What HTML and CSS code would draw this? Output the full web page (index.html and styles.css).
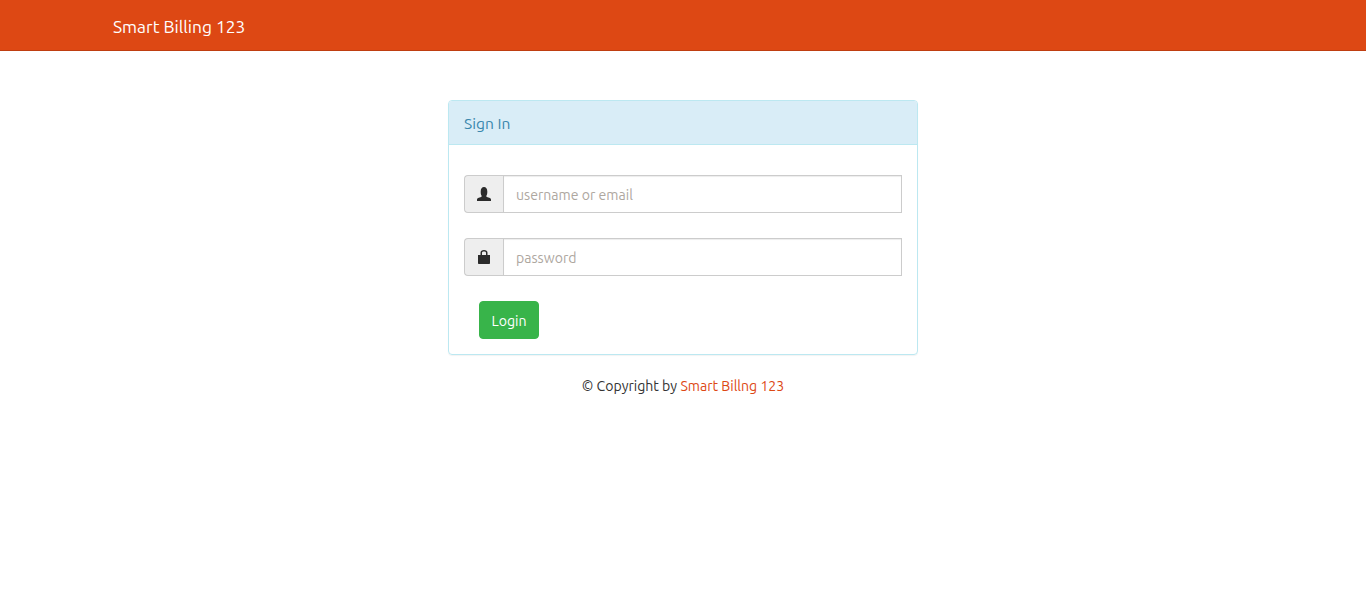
FILE: index.html
```html
<!DOCTYPE html>
<html lang="en">
<head>
<meta charset="utf-8">
<title>Smart Billing 123</title>
<link rel="stylesheet" href="styles.css">
</head>
<body>
<nav class="navbar"><a class="brand" href="#">Smart Billing 123</a></nav>
<main class="main">
  <section class="panel">
    <div class="panel-heading">Sign In</div>
    <form class="panel-body">
      <div class="input-group">
        <span class="addon"><svg width="14" height="14" viewBox="0 0 14 14"><path fill="#2b2b2b" d="M0 14v-1.500c0-.9.8-1.300 1.800-1.700l2.300-.9c.6-.3.7-.9.4-1.500C3.800 7.300 3.700 6 3.700 4.400 3.700 1.600 5 0 7 0s3.300 1.600 3.300 4.400c0 1.600-.1 2.900-.8 4-.3.6-.2 1.200.4 1.500l2.300.9c1 .4 1.800.8 1.800 1.700V14z"/></svg></span>
        <input class="field" type="text" placeholder="username or email">
      </div>
      <div class="input-group">
        <span class="addon"><svg width="14" height="14" viewBox="0 0 14 14"><path fill="#2b2b2b" fill-rule="evenodd" d="M3.500 5V2.800C3.500 1 4.900 0 7 0s3.500 1 3.500 2.800V5H13v8c0 .6-.4 1-1 1H2c-.6 0-1-.4-1-1V5zM5 5h4V2.800c0-.8-.8-1.300-2-1.300s-2 .5-2 1.300z"/></svg></span>
        <input class="field" type="password" placeholder="password">
      </div>
      <button class="login" type="button">Login</button>
    </form>
  </section>
  <p class="copyright">© Copyright by <a href="#">Smart Billng 123</a></p>
</main>
</body>
</html>
```
FILE: styles.css
```css
* { box-sizing: border-box; }
html, body { margin: 0; padding: 0; }
body {
  background: #fff;
  color: #333;
  font-family: Ubuntu, "Noto Sans", "Open Sans", sans-serif;
  font-size: 14.1px;
  line-height: 20px;
}
a { color: #dd4814; text-decoration: none; }
.navbar {
  height: 51px;
  background: #dd4814;
  border-bottom: 1px solid #bf3e11;
  padding: 4px 113px 0;
  display: flex;
  align-items: center;
}
.brand { color: #fff; font-size: 17.4px; }
.main {
  width: 470px;
  margin: 49px auto 0;
}
.panel {
  border: 1px solid #bce8f1;
  border-radius: 4px;
  height: 255px;
  box-shadow: 0 1px 1px rgba(0,0,0,.05);
}
.panel-heading {
  height: 44px;
  background: #d9edf7;
  border-bottom: 1px solid #bce8f1;
  border-radius: 3px 3px 0 0;
  color: #3a87ad;
  font-size: 15.6px;
  padding: 12px 15px 0;
}
.panel-body { padding: 30px 15px 15px; }
.input-group { display: flex; height: 38px; margin-bottom: 25px; }
.addon {
  width: 39px;
  display: flex;
  align-items: center;
  justify-content: center;
  background: #eee;
  border: 1px solid #ccc;
  border-right: 0;
  border-radius: 4px 0 0 4px;
}
.field {
  flex: 1;
  min-width: 0;
  border: 1px solid #ccc;
  box-shadow: inset 0 1px 1px rgba(0,0,0,.075);
  padding: 10px 12px 8px;
  font: inherit;
  color: #555;
  outline: none;
}
.field::placeholder { color: #aea79f; opacity: 1; }
.login {
  display: block;
  margin-left: 15px;
  width: 60px;
  height: 38px;
  background: #38b44a;
  border: 1px solid #38b44a;
  border-radius: 4px;
  color: #fff;
  font: inherit;
  padding: 2px 0 0;
}
.copyright { margin: 21px 0 0; text-align: center; }
```
